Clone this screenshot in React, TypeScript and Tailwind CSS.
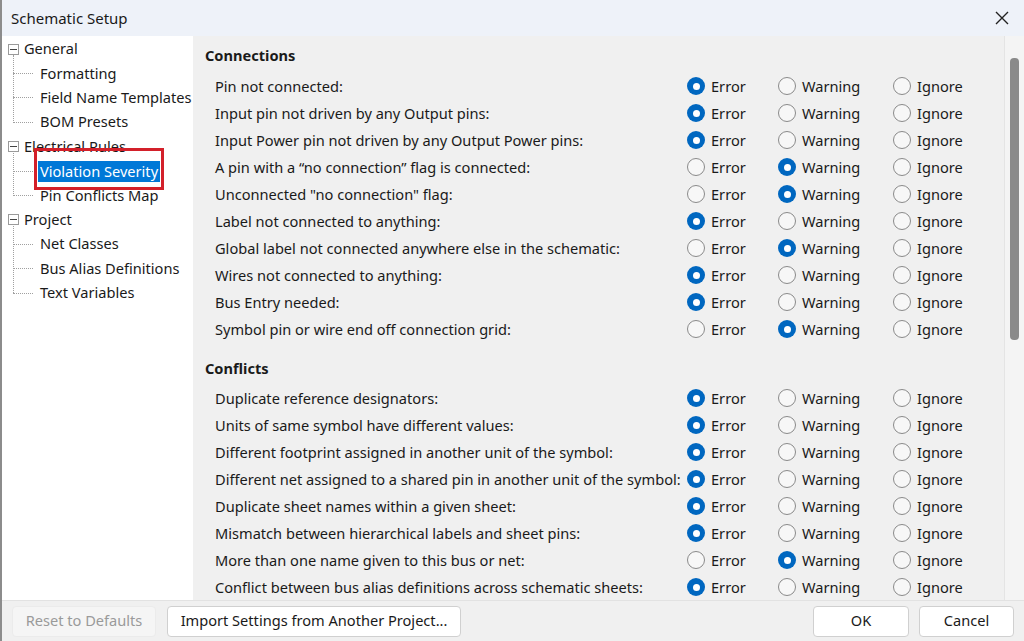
import React from 'react'

type Sev = 'Error' | 'Warning' | 'Ignore'

const connections: [string, Sev][] = [
  ['Pin not connected:', 'Error'],
  ['Input pin not driven by any Output pins:', 'Error'],
  ['Input Power pin not driven by any Output Power pins:', 'Error'],
  ['A pin with a \u201cno connection\u201d flag is connected:', 'Warning'],
  ['Unconnected "no connection" flag:', 'Warning'],
  ['Label not connected to anything:', 'Error'],
  ['Global label not connected anywhere else in the schematic:', 'Warning'],
  ['Wires not connected to anything:', 'Error'],
  ['Bus Entry needed:', 'Error'],
  ['Symbol pin or wire end off connection grid:', 'Warning'],
]

const conflicts: [string, Sev][] = [
  ['Duplicate reference designators:', 'Error'],
  ['Units of same symbol have different values:', 'Error'],
  ['Different footprint assigned in another unit of the symbol:', 'Error'],
  ['Different net assigned to a shared pin in another unit of the symbol:', 'Error'],
  ['Duplicate sheet names within a given sheet:', 'Error'],
  ['Mismatch between hierarchical labels and sheet pins:', 'Error'],
  ['More than one name given to this bus or net:', 'Warning'],
  ['Conflict between bus alias definitions across schematic sheets:', 'Error'],
]

const tree: { label: string; children: string[] }[] = [
  { label: 'General', children: ['Formatting', 'Field Name Templates', 'BOM Presets'] },
  { label: 'Electrical Rules', children: ['Violation Severity', 'Pin Conflicts Map'] },
  { label: 'Project', children: ['Net Classes', 'Bus Alias Definitions', 'Text Variables'] },
]

const Radio = ({ on, label }: { on: boolean; label: string }) => (
  <div className="flex items-center gap-[6px]">
    {on ? (
      <span className="w-[18px] h-[18px] rounded-full bg-[#0067c0] flex items-center justify-center">
        <span className="w-[7px] h-[7px] rounded-full bg-white" />
      </span>
    ) : (
      <span className="w-[18px] h-[18px] rounded-full border border-[#8a8a8a] bg-[#f7f7f7]" />
    )}
    <span>{label}</span>
  </div>
)

const Row = ({ label, sev }: { label: string; sev: Sev }) => (
  <div className="flex items-center h-[27px]">
    <div className="w-[482px] pl-[10px] whitespace-nowrap">{label}</div>
    <div className="w-[91px]"><Radio on={sev === 'Error'} label="Error" /></div>
    <div className="w-[115px]"><Radio on={sev === 'Warning'} label="Warning" /></div>
    <div><Radio on={sev === 'Ignore'} label="Ignore" /></div>
  </div>
)

const Minus = () => (
  <span className="w-[11px] h-[11px] border border-[#9a9a9a] bg-white flex items-center justify-center">
    <span className="w-[7px] h-px bg-[#444]" />
  </span>
)

export default function App() {
  return (
    <div
      className="w-[1024px] h-[641px] bg-[#f0f0f0] flex flex-col text-[14.6px] text-[#1a1a1a] border-l-2 border-[#8c8c8c] overflow-hidden"
      style={{ fontFamily: '"Noto Sans", "Open Sans", sans-serif' }}
    >
      {/* title bar */}
      <div className="h-[36px] bg-[#eef2f9] flex items-center justify-between pl-[9px] pr-[14px] shrink-0 text-[15px]">
        <span>Schematic Setup</span>
        <svg width="16" height="16" viewBox="0 0 16 16" className="text-[#222]">
          <path d="M2 2 L14 14 M14 2 L2 14" stroke="currentColor" strokeWidth="1.4" />
        </svg>
      </div>

      <div className="flex flex-1 min-h-0">
        {/* tree */}
        <div className="w-[191px] bg-white pt-[1px] relative shrink-0 whitespace-nowrap">
          {tree.map((g) => (
            <div key={g.label} className="relative">
              <div className="absolute left-[11px] top-[18px] bottom-[12px] border-l border-dotted border-[#a0a0a0]" />
              <div className="flex items-center h-[24.4px] gap-[5px] pl-[6px]">
                <Minus />
                <span>{g.label}</span>
              </div>
              {g.children.map((c) => (
                <div key={c} className="flex items-center h-[24.4px] pl-[11px]">
                  <span className="w-[20px] border-t border-dotted border-[#a0a0a0]" />
                  {c === 'Violation Severity' ? (
                    <span className="bg-[#0078d7] text-white pl-[2px] pr-[2px] ml-[5px] leading-[21px]">{c}</span>
                  ) : (
                    <span className="ml-[7px]">{c}</span>
                  )}
                </div>
              ))}
            </div>
          ))}
          <div className="absolute left-[32px] top-[112px] w-[130px] h-[42px] border-[3px] border-[#d3202a]" />
        </div>

        {/* severity list */}
        <div className="flex-1 flex min-w-0">
          <div className="flex-1 pl-[12px] pt-[8px] overflow-hidden">
            <div className="font-bold h-[22px] leading-[22px]">Connections</div>
            <div className="mt-[7px]">
              {connections.map(([l, s]) => <Row key={l} label={l} sev={s} />)}
            </div>
            <div className="font-bold h-[22px] leading-[22px] mt-[14px]">Conflicts</div>
            <div className="mt-[6px]">
              {conflicts.map(([l, s]) => <Row key={l} label={l} sev={s} />)}
            </div>
          </div>
          <div className="w-[20px] border-l border-[#e4e4e4] bg-[#f4f4f4] pt-[22px] flex justify-center shrink-0">
            <div className="w-[9px] h-[282px] bg-[#8a8a8a] rounded-sm" />
          </div>
        </div>
      </div>

      {/* button bar */}
      <div className="h-[41px] shrink-0 flex items-center px-[10px] border-t border-[#e2e2e2]">
        <div className="h-[31px] w-[144px] flex items-center justify-center bg-[#f5f5f5] border border-[#ebebeb] rounded-[4px] text-[#9a9a9a]">
          Reset to Defaults
        </div>
        <div className="h-[31px] w-[294px] ml-[11px] flex items-center justify-center bg-white border border-[#d0d0d0] rounded-[4px]">
          Import Settings from Another Project...
        </div>
        <div className="flex-1" />
        <div className="h-[31px] w-[96px] flex items-center justify-center bg-white border border-[#d0d0d0] rounded-[4px]">
          OK
        </div>
        <div className="h-[31px] w-[95px] ml-[10px] flex items-center justify-center bg-white border border-[#d0d0d0] rounded-[4px]">
          Cancel
        </div>
      </div>
    </div>
  )
}
